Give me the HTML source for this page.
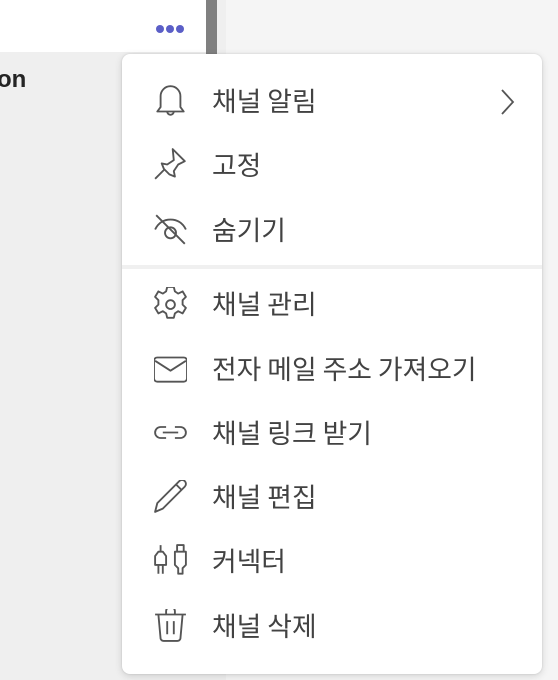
<!DOCTYPE html>
<html><head><meta charset="utf-8"><style>
html,body{margin:0;padding:0;width:558px;height:680px;overflow:hidden;background:#efefef;font-family:"Liberation Sans","Noto Sans CJK KR",sans-serif;position:relative}
.top{position:absolute;left:0;top:0;width:206px;height:52px;background:#fff}
.dots{position:absolute;left:156px;top:20px}
.dots i{display:inline-block;width:8px;height:8px;border-radius:50%;background:#5b5fc7;margin-right:2px}
.bar{position:absolute;left:206px;top:0;width:11px;height:60px;background:#808080}
.right{position:absolute;left:226px;top:0;width:332px;height:680px;background:#f5f5f5}
.on{position:absolute;left:-3px;top:66px;font-weight:bold;font-size:24px;color:#242424}
.menu{position:absolute;left:122px;top:54px;width:420px;height:620px;background:#fff;border-radius:8px;box-shadow:0 2px 8px rgba(0,0,0,.14),0 0 2px rgba(0,0,0,.12)}
.row{position:absolute;left:0;width:420px;height:40px}
.row svg{position:absolute;left:32px;top:3px}
.row span{position:absolute;left:90px;top:2px;font-size:26.8px;color:#424242;font-family:"Noto Sans CJK KR",sans-serif;line-height:34px;white-space:nowrap}
.div{position:absolute;left:0;top:211px;width:420px;height:4px;background:#f0f0f0}
</style></head><body>
<div class="top"><div class="dots"><i></i><i></i><i></i></div></div>
<div class="bar"></div>
<div class="right"></div>
<div class="on">on</div>
<div class="menu">
<div class="row" style="top:27px"><svg width="33" height="33" viewBox="3 3 30 30" fill="none" stroke="#555" stroke-width="1.7" stroke-linejoin="round"><path d="M6 28h24l-3-4V14a9 9 0 0 0-18 0v10z"/><path d="M15 28a3 3 0 0 0 6 0"/></svg><span>채널 알림</span>
<svg style="left:378px;top:8px" width="16" height="26" viewBox="0 0 16 26" fill="none" stroke="#555" stroke-width="1.8"><path d="M2 1l11 12L2 25"/></svg></div>
<div class="row" style="top:91px"><svg width="33" height="33" viewBox="3 3 30 30" fill="none" stroke="#555" stroke-width="1.7" stroke-linejoin="round"><path d="M20 4l11 11-6 3-4 6 1 5-5-2-5-5-2-5 5 1 6-4z"/><path d="M12 23l-8 8"/></svg><span>고정</span></div>
<div class="row" style="top:156px"><svg width="33" height="33" viewBox="3 3 30 30" fill="none" stroke="#555" stroke-width="1.7"><path d="M4 18c3-6 8-9 14-9s11 3 14 9"/><circle cx="18" cy="21" r="5"/><path d="M5 5l26 26"/></svg><span>숨기기</span></div>
<div class="div"></div>
<div class="row" style="top:230px"><svg width="33" height="33" viewBox="3 3 30 30" fill="none" stroke="#555" stroke-width="1.7" stroke-linejoin="round"><path d="M15 3h6l1 4 3 2 4-2 3 5-3 3v4l3 3-3 5-4-2-3 2-1 4h-6l-1-4-3-2-4 2-3-5 3-3v-4l-3-3 3-5 4 2 3-2z"/><circle cx="18" cy="19" r="4"/></svg><span>채널 관리</span></div>
<div class="row" style="top:295px"><svg width="33" height="33" viewBox="3 3 30 30" fill="none" stroke="#555" stroke-width="1.7" stroke-linejoin="round"><rect x="3" y="8" width="30" height="22" rx="3"/><path d="M4 11l14 9 14-9"/></svg><span>전자 메일 주소 가져오기</span></div>
<div class="row" style="top:359px"><svg width="33" height="33" viewBox="3 3 30 30" fill="none" stroke="#555" stroke-width="1.7"><path d="M14 13H9a5 5 0 0 0 0 10h5M22 13h5a5 5 0 0 1 0 10h-5M11 18h14"/></svg><span>채널 링크 받기</span></div>
<div class="row" style="top:423px"><svg width="33" height="33" viewBox="3 3 30 30" fill="none" stroke="#555" stroke-width="1.7" stroke-linejoin="round"><path d="M4 32l2-8L26 4a3 3 0 0 1 5 5L11 29z"/><path d="M23 7l5 5"/></svg><span>채널 편집</span></div>
<div class="row" style="top:487px"><svg width="33" height="33" viewBox="3 3 30 30" fill="none" stroke="#555" stroke-width="1.7" stroke-linejoin="round"><path d="M9 4v6M7 10l-3 4v8h10v-8l-3-4zM7 22v8M11 22v8M24 4h6v6h-6zM22 10h10v12l-3 3v5h-4v-5l-3-3z"/></svg><span>커넥터</span></div>
<div class="row" style="top:552px"><svg width="33" height="33" viewBox="3 3 30 30" fill="none" stroke="#555" stroke-width="1.7" stroke-linejoin="round"><path d="M4 8h28M14 8V5a4 4 0 0 1 8 0v3M7 8l2 22a3 3 0 0 0 3 2h12a3 3 0 0 0 3-2l2-22M15 14v12M21 14v12"/></svg><span>채널 삭제</span></div>
</div>
</body></html>
